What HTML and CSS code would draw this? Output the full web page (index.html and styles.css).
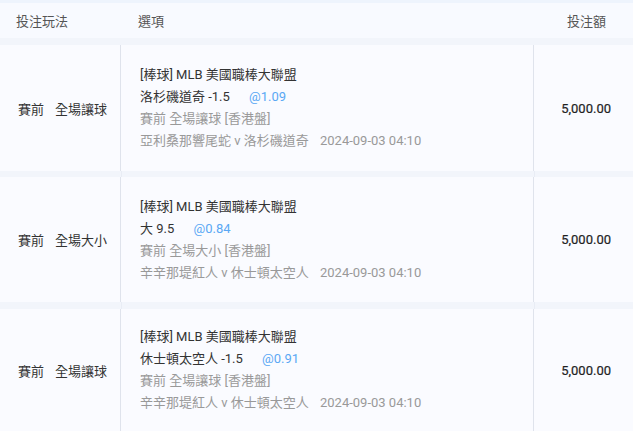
FILE: index.html
```html
<!DOCTYPE html>
<html lang="zh-Hant">
<head>
    <meta charset="UTF-8">
    <title>投注記錄</title>
    <link rel="stylesheet" href="styles.css">
</head>
<body>
    <div class="topbar"></div>
    <div class="head-row">
        <div class="col-type">投注玩法</div>
        <div class="col-opt">選項</div>
        <div class="col-amt">投注額</div>
    </div>
    <div class="list">
        <div class="bet-row">
            <div class="col-type"><span>賽前</span><span>全場讓球</span></div>
            <div class="col-opt">
                <p>[棒球] MLB 美國職棒大聯盟</p>
                <p>洛杉磯道奇 -1.5 <span class="odds">@1.09</span></p>
                <p class="muted">賽前 全場讓球 [香港盤]</p>
                <p class="muted">亞利桑那響尾蛇 v 洛杉磯道奇 <span class="time">2024-09-03 04:10</span></p>
            </div>
            <div class="col-amt">5,000.00</div>
        </div>
        <div class="bet-row">
            <div class="col-type"><span>賽前</span><span>全場大小</span></div>
            <div class="col-opt">
                <p>[棒球] MLB 美國職棒大聯盟</p>
                <p>大 9.5 <span class="odds">@0.84</span></p>
                <p class="muted">賽前 全場大小 [香港盤]</p>
                <p class="muted">辛辛那堤紅人 v 休士頓太空人 <span class="time">2024-09-03 04:10</span></p>
            </div>
            <div class="col-amt">5,000.00</div>
        </div>
        <div class="bet-row">
            <div class="col-type"><span>賽前</span><span>全場讓球</span></div>
            <div class="col-opt">
                <p>[棒球] MLB 美國職棒大聯盟</p>
                <p>休士頓太空人 -1.5 <span class="odds">@0.91</span></p>
                <p class="muted">賽前 全場讓球 [香港盤]</p>
                <p class="muted">辛辛那堤紅人 v 休士頓太空人 <span class="time">2024-09-03 04:10</span></p>
            </div>
            <div class="col-amt">5,000.00</div>
        </div>
    </div>
</body>
</html>
```

FILE: styles.css
```css
body { margin: 0; font-family: Roboto, "Noto Sans CJK TC", sans-serif; font-size: 13px; color: #333; background: #f2f5fb; overflow: hidden; }
p { margin: 0; }
.topbar { height: 3px; background: #eef4fd; }
.head-row { display: grid; grid-template-columns: 121px 1fr 99px; height: 34px; padding-bottom: 1px; align-items: center; background: #f8faff; color: #555; }
.head-row .col-type { padding-left: 16px; }
.head-row .col-opt { padding-left: 17px; }
.head-row .col-amt { text-align: right; padding-right: 27px; }
.list { background: linear-gradient(to right, transparent 121px, #e9edf5 121px, #e9edf5 122px, transparent 122px, transparent 534px, #e9edf5 534px, #e9edf5 535px, transparent 535px); }
.bet-row { display: grid; grid-template-columns: 121px 1fr 99px; margin-top: 7px; background: #fafbff; height: 126px; }
.bet-row:nth-child(2) { height: 125px; margin-top: 6px; }
.bet-row:last-child { height: 122px; }
.bet-row .col-type { display: flex; align-items: center; gap: 11px; padding-left: 18px; border-right: 1px solid #dfe3ec; }
.bet-row .col-opt { display: flex; flex-direction: column; justify-content: center; padding-left: 19px; line-height: 22px; border-right: 1px solid #dfe3ec; }
.bet-row .col-amt { display: flex; align-items: center; justify-content: flex-end; padding-right: 22px; color: #1f1f1f; -webkit-text-stroke: 0.2px #1f1f1f; }
.odds { color: #5aa8f4; margin-left: 16px; }
.muted { color: #999; }
.time { margin-left: 8px; }
```
